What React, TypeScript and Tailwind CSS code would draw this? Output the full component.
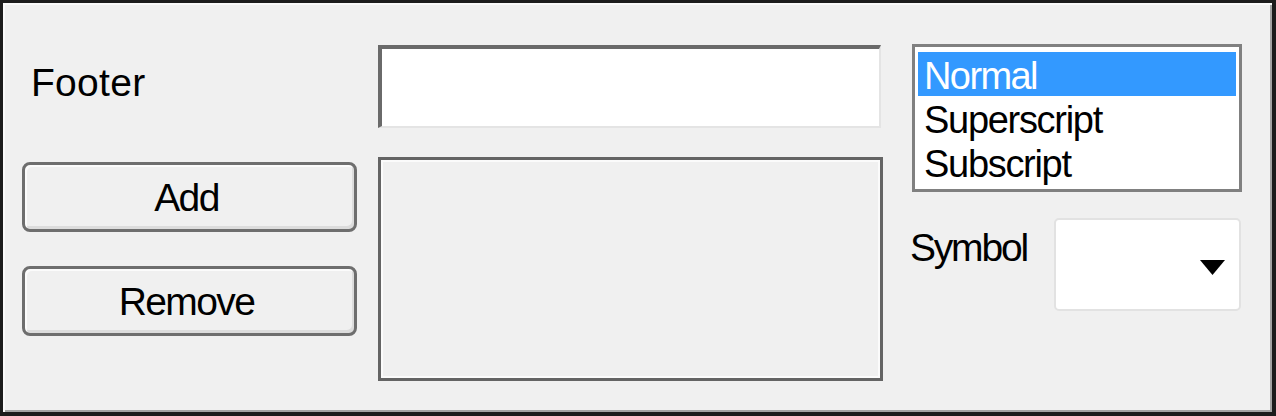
import { useState } from "react";

const font = { fontFamily: '"Liberation Sans", Arial, sans-serif' };

function WinButton({ label }: { label: string }) {
  return (
    <button
      type="button"
      className="w-[335px] h-[70px] flex items-center justify-center pr-[6px] pt-[2px] rounded-[8px] border-[3px] border-[#6e6e6e] bg-[#f0f0f0] shadow-[inset_2px_2px_0_#fbfbfb,inset_-2px_-3px_0_#dcdcdc] text-[39px] leading-[44px] tracking-[-1.6px] text-black"
    >
      {label}
    </button>
  );
}

export default function App() {
  const [selected, setSelected] = useState("Normal");
  const options = ["Normal", "Superscript", "Subscript"];

  return (
    <div
      style={font}
      className="w-[1276px] h-[416px] bg-[#f0f0f0] border-l-[3px] border-t-[3px] border-r-[4px] border-b-[4px] border-[#1c1c1c] shadow-[inset_2px_2px_0_#fafafa,inset_-2px_-2px_0_#a3a3a3] pt-[41px] flex items-start"
    >
      {/* Left column: label + buttons */}
      <div className="ml-[19px] w-[335px] flex flex-col">
        <div className="ml-[9px] mt-[17px] h-[44px] text-[39px] leading-[44px] tracking-[0.3px] text-black">
          Footer
        </div>
        <div className="mt-[57px]">
          <WinButton label="Add" />
        </div>
        <div className="mt-[34px]">
          <WinButton label="Remove" />
        </div>
      </div>

      {/* Middle column: text box + panel */}
      <div className="ml-[21px] w-[505px] flex flex-col">
        <div className="mt-[1px] w-[503px] h-[83px] bg-white border-t-4 border-l-4 border-r-2 border-b-2 border-t-[#6a6a6a] border-l-[#6a6a6a] border-r-[#e4e4e4] border-b-[#e4e4e4]" />
        <div className="mt-[29px] w-[505px] h-[224px] bg-[#f0f0f0] border-[3px] border-[#646464] shadow-[inset_2px_2px_0_#fbfbfb,inset_-2px_-2px_0_#fbfbfb]" />
      </div>

      {/* Right column: list + symbol combo */}
      <div className="ml-[29px] w-[330px] flex flex-col">
        <div className="w-[330px] h-[148px] bg-white border-[3px] border-[#808080] px-[3px] pt-[5px]">
          {options.map((o) => (
            <div
              key={o}
              onClick={() => setSelected(o)}
              className={
                o === selected
                  ? "h-[44px] pl-[6px] text-[38px] leading-[48px] tracking-[-1.6px] bg-[#3399ff] text-white overflow-hidden"
                  : "h-[44px] pl-[6px] text-[38px] leading-[48px] tracking-[-1.3px] text-black"
              }
            >
              {o}
            </div>
          ))}
        </div>
        <div className="mt-[26px] flex items-start">
          <div className="ml-[-2px] mt-[8px] w-[144px] text-[39px] leading-[44px] tracking-[-2.2px] text-black">
            Symbol
          </div>
          <div className="w-[187px] h-[93px] bg-white border-2 border-[#e2e2e2] rounded-[5px] flex items-center justify-end pr-[14px] pt-[6px]">
            <svg width="25" height="15" viewBox="0 0 25 15">
              <path d="M0 0 H25 L12.5 15 Z" fill="#000" />
            </svg>
          </div>
        </div>
      </div>
    </div>
  );
}
